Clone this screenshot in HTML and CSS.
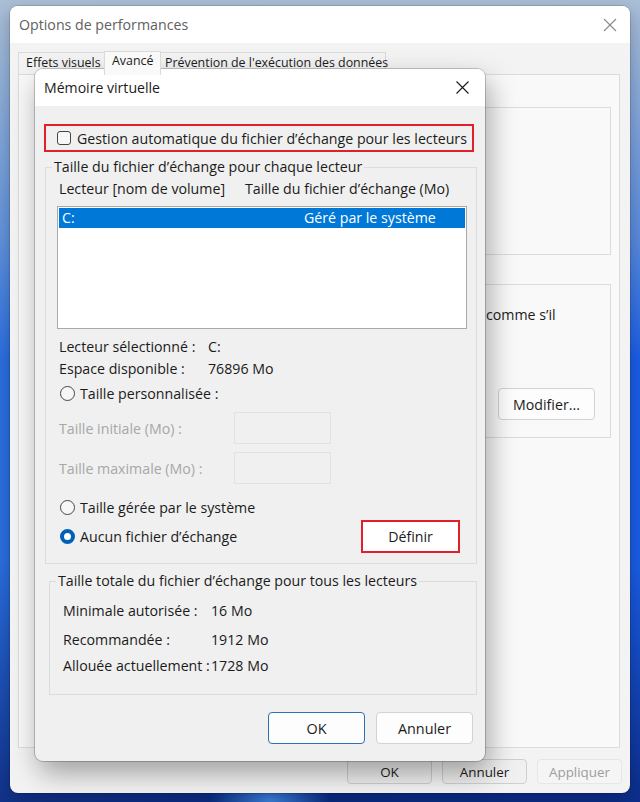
FILE: index.html
```html
<!DOCTYPE html>
<html lang="fr">
<head>
    <meta charset="UTF-8">
    <meta name="viewport" content="width=device-width, initial-scale=1.0">
    <title>Mémoire virtuelle</title>
    <link rel="stylesheet" href="styles.css">
</head>
<body>
    <div class="window perf">
        <div class="titlebar">
            <span class="title">Options de performances</span>
            <svg class="close" width="14" height="14" viewBox="0 0 14 14"><path d="M1 1L13 13M13 1L1 13" stroke="#8a8a8a" stroke-width="1.1"/></svg>
        </div>
        <div class="tabs">
            <span class="tab">Effets visuels</span>
            <span class="tab active">Avancé</span>
            <span class="tab">Prévention de l'exécution des données</span>
        </div>
        <div class="tab-panel">
            <div class="panel-group first"></div>
            <div class="panel-group second">
                <p class="panel-text">comme s’il</p>
                <button class="btn modify">Modifier...</button>
            </div>
        </div>
        <div class="actions">
            <button class="btn small">OK</button>
            <button class="btn small">Annuler</button>
            <button class="btn small disabled">Appliquer</button>
        </div>
    </div>

    <div class="window vm">
        <div class="titlebar">
            <span class="title">Mémoire virtuelle</span>
            <svg class="close" width="13" height="13" viewBox="0 0 13 13"><path d="M0.5 0.5L12.5 12.5M12.5 0.5L0.5 12.5" stroke="#1a1a1a" stroke-width="1.1"/></svg>
        </div>
        <div class="vm-body">
            <label class="auto-check highlight">
                <span class="checkbox"></span>
                Gestion automatique du fichier d’échange pour les lecteurs
            </label>

            <fieldset class="group drives">
                <legend>Taille du fichier d’échange pour chaque lecteur</legend>
                <div class="cols">
                    <span>Lecteur [nom de volume]</span>
                    <span>Taille du fichier d’échange (Mo)</span>
                </div>
                <div class="list">
                    <div class="list-row selected">
                        <span>C:</span>
                        <span>Géré par le système</span>
                    </div>
                </div>
                <div class="info-row first"><span>Lecteur sélectionné :</span><span>C:</span></div>
                <div class="info-row"><span>Espace disponible :</span><span>76896 Mo</span></div>
                <div class="radio-row custom"><span class="radio"></span>Taille personnalisée :</div>
                <div class="field-row first"><span>Taille initiale (Mo) :</span><span class="field"></span></div>
                <div class="field-row"><span>Taille maximale (Mo) :</span><span class="field"></span></div>
                <div class="radio-row system"><span class="radio"></span>Taille gérée par le système</div>
                <div class="radio-row none">
                    <span class="radio checked"></span>Aucun fichier d’échange
                    <button class="btn define highlight">Définir</button>
                </div>
            </fieldset>

            <fieldset class="group totals">
                <legend>Taille totale du fichier d’échange pour tous les lecteurs</legend>
                <div class="total-row min"><span>Minimale autorisée :</span><span>16 Mo</span></div>
                <div class="total-row rec"><span>Recommandée :</span><span>1912 Mo</span></div>
                <div class="total-row cur"><span>Allouée actuellement :</span><span>1728 Mo</span></div>
            </fieldset>

            <div class="dialog-buttons">
                <button class="btn big default">OK</button>
                <button class="btn big">Annuler</button>
            </div>
        </div>
    </div>
</body>
</html>
```

FILE: styles.css
```css
* {
    box-sizing: border-box;
}
html, body {
    margin: 0;
    height: 100%;
}
body {
    position: relative;
    width: 640px;
    height: 802px;
    overflow: hidden;
    font-family: "Open Sans", "Noto Sans", sans-serif;
    font-size: 14.2px;
    color: #1b1b1b;
    background:
        radial-gradient(ellipse 60px 30px at 270px 800px, #3f86e6, transparent),
        linear-gradient(180deg, rgba(178, 196, 214, 0.95) 0%, rgba(150, 182, 216, 0.5) 30%, rgba(40, 110, 230, 0) 45%),
        linear-gradient(180deg, rgba(8, 30, 110, 0) 70%, rgba(8, 30, 110, 0.75) 100%),
        linear-gradient(90deg, #2a6fe0 0%, #1657d6 50%, #1a5ee6 100%);
}
.window {
    position: absolute;
    border-radius: 8px;
    overflow: hidden;
}
.titlebar {
    display: flex;
    align-items: center;
    justify-content: space-between;
    height: 37px;
    background: #fff;
}
.close {
    display: block;
}

/* background window */
.perf {
    left: 10px;
    top: 6px;
    width: 620px;
    height: 787px;
    display: flex;
    flex-direction: column;
    background: #f3f3f3;
    box-shadow: 0 0 0 1px rgba(0, 0, 0, 0.12), 0 6px 18px rgba(0, 0, 0, 0.25);
}
.perf .titlebar {
    padding: 0 13px 0 9px;
}
.perf .title {
    font-size: 14.2px;
    color: #606060;
}
.tabs {
    display: flex;
    align-items: flex-end;
    height: 31px;
    padding-left: 8px;
    font-size: 12.4px;
}
.tab {
    height: 22px;
    line-height: 20px;
    border: 1px solid #dadada;
    border-bottom: none;
    background: #f3f3f3;
    white-space: nowrap;
}
.tab:nth-child(1) {
    width: 87px;
    padding-left: 7px;
}
.tab:nth-child(2) {
    width: 57px;
    padding-left: 7px;
}
.tab:nth-child(3) {
    width: 226px;
    padding-left: 4px;
}
.tab + .tab {
    margin-left: -1px;
}
.tab.active {
    height: 24px;
    line-height: 18px;
    background: #f9f9f9;
    position: relative;
    z-index: 1;
    margin-bottom: -1px;
}
.tab-panel {
    height: 674px;
    margin: 0 10px 0 8px;
    padding-top: 32px;
    border: 1px solid #dcdcdc;
    background: #f9f9f9;
}
.panel-group {
    margin: 0 8px 0 20px;
    border: 1px solid #dcdcdc;
}
.panel-group.first {
    height: 148px;
}
.panel-group.second {
    height: 154px;
    margin-top: 29px;
    padding-top: 20px;
    display: flex;
    flex-direction: column;
}
.panel-text {
    margin: 0 0 0 446px;
    line-height: 20px;
    white-space: nowrap;
}
.btn {
    font: inherit;
    color: #1b1b1b;
    background: #fdfdfd;
    border: 1px solid #d2d2d2;
    border-radius: 4px;
    padding: 0;
}
.modify {
    align-self: flex-end;
    width: 97px;
    height: 32px;
    margin: 63px 15px 0 0;
}
.actions {
    display: flex;
    justify-content: flex-end;
    gap: 10px;
    padding: 11px 8px 0 0;
}
.btn.small {
    width: 85px;
    height: 25px;
    font-size: 13.4px;
    background: #f0f0f0;
    border-color: #cfcfcf;
}
.btn.disabled {
    color: #9d9d9d;
    background: #f5f5f5;
    border-color: #e6e6e6;
}

/* virtual memory dialog */
.vm {
    left: 35px;
    top: 69px;
    width: 450px;
    height: 692px;
    background: #f0f0f0;
    box-shadow: 0 0 0 1px rgba(0, 0, 0, 0.2), 4px 12px 28px rgba(0, 0, 0, 0.35);
}
.vm .titlebar {
    padding: 0 16px 0 9px;
}
.vm .title {
    font-size: 14.1px;
}
.vm-body {
    padding-top: 18px;
}
.highlight {
    border: 2px solid #e0202b !important;
}
.auto-check {
    display: flex;
    align-items: center;
    width: 430px;
    height: 28px;
    margin-left: 9px;
    padding-left: 11px;
    gap: 6px;
    white-space: nowrap;
}
.checkbox {
    flex: none;
    width: 14px;
    height: 14px;
    border: 1px solid #454545;
    border-radius: 3px;
    background: #f7f7f7;
}
.group {
    margin: 0;
    padding: 0;
    border: 1px solid #dcdcdc;
}
.group legend {
    line-height: 20px;
    padding: 0 2px;
    margin-left: -7px;
}
.drives {
    width: 432px;
    height: 407px;
    margin: 5px 0 0 10px;
    padding: 0 0 0 13px;
}
.cols {
    display: flex;
    height: 22px;
    line-height: 22px;
    margin-top: 1px;
    white-space: nowrap;
}
.cols span:first-child {
    width: 186px;
}
.list {
    width: 410px;
    height: 123px;
    margin: 6px 0 0 -2px;
    padding: 1px;
    border: 1px solid #a9a9a9;
    background: #fff;
}
.list-row {
    display: flex;
    height: 20px;
    line-height: 20px;
    padding-left: 3px;
}
.list-row.selected {
    background: #0078d7;
    color: #fff;
}
.list-row span:first-child {
    width: 242px;
}
.info-row {
    display: flex;
    height: 22px;
    line-height: 22px;
}
.info-row.first {
    margin-top: 7px;
}
.info-row span:first-child {
    width: 149px;
}
.radio-row {
    display: flex;
    align-items: center;
    height: 22px;
    gap: 5px;
}
.radio-row.custom {
    margin-top: 2px;
}
.radio-row.system {
    margin-top: 12px;
}
.radio-row.none {
    height: 33px;
    margin-top: 2px;
}
.radio {
    flex: none;
    width: 15px;
    height: 15px;
    margin-left: 1px;
    border: 1px solid #454545;
    border-radius: 50%;
    background: #f7f7f7;
}
.radio.checked {
    border: 4.5px solid #005fb8;
    background: #fff;
}
.field-row {
    display: flex;
    align-items: center;
    height: 32px;
    margin-top: 8px;
    color: #a7a7a7;
}
.field-row span:first-child {
    width: 175px;
}
.field {
    width: 97px;
    height: 32px;
    border: 1px solid #e2e2e2;
    background: #f0f0f0;
}
.define {
    width: 99px;
    height: 33px;
    margin-left: auto;
    margin-right: 16px;
    border-radius: 0;
    background: #fff;
}
.totals {
    width: 428px;
    height: 124px;
    margin: 7px 0 0 14px;
    padding: 0 0 0 13px;
}
.total-row {
    display: flex;
    height: 22px;
    line-height: 22px;
}
.total-row span:first-child {
    flex: none;
    width: 148px;
    white-space: nowrap;
}
.total-row.min {
    margin-top: 9px;
}
.total-row.rec {
    margin-top: 7px;
}
.total-row.cur {
    margin-top: 4px;
}
.dialog-buttons {
    display: flex;
    justify-content: flex-end;
    gap: 11px;
    padding: 17px 12px 0 0;
}
.btn.big {
    width: 97px;
    height: 32px;
    font-size: 14.4px;
}
.btn.default {
    border-color: #2f6fb3;
}
```
